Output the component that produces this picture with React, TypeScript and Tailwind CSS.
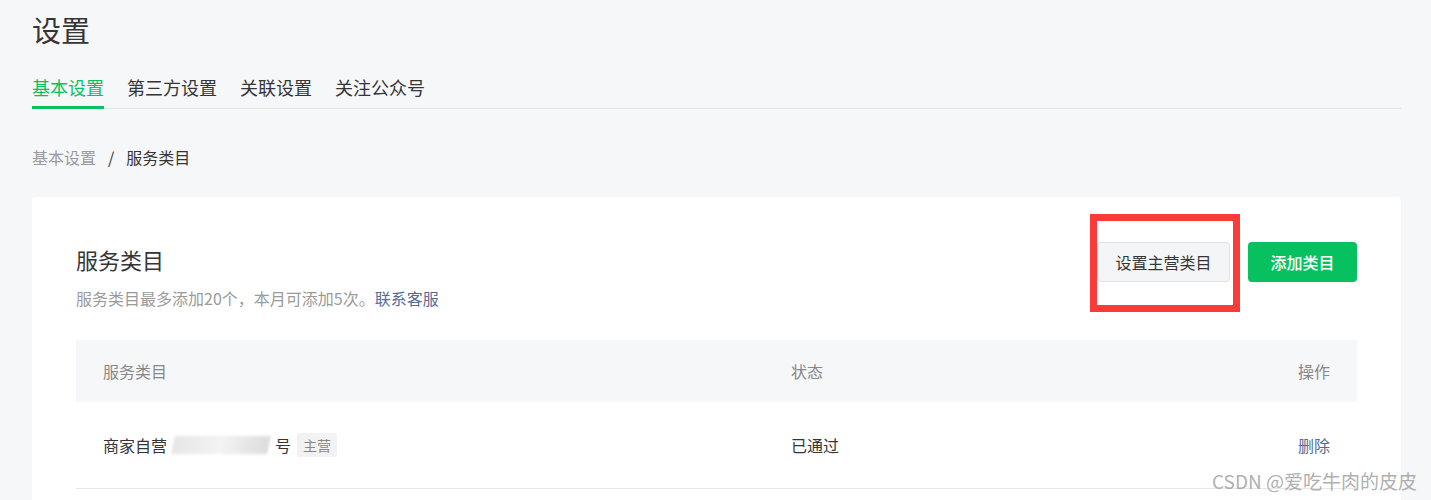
import React from "react";

const font = { fontFamily: '"Noto Sans CJK SC", "Noto Sans", sans-serif' };

const tabs = ["基本设置", "第三方设置", "关联设置", "关注公众号"];

export default function App() {
  return (
    <div className="relative min-h-[500px] overflow-hidden bg-[#f6f7f9] pl-[32px] pr-[30px] pt-[9px] text-[#353535]" style={font}>
      {/* page title */}
      <h1 className="text-[29px] leading-[40px] font-normal">设置</h1>

      {/* tabs */}
      <div className="mt-[26px] flex border-b border-[#e2e3e6]">
        {tabs.map((t, i) => (
          <div
            key={t}
            className={`mr-[23px] -mb-px pb-[7px] text-[18px] leading-[24px] ${
              i === 0 ? "border-b-[3px] border-[#07c160] text-[#07c160]" : "border-b-[3px] border-transparent"
            }`}
          >
            {t}
          </div>
        ))}
      </div>

      {/* breadcrumb */}
      <div className="mt-[36px] flex items-center text-[16px] leading-[24px]">
        <span className="text-[#9a9a9a]">基本设置</span>
        <span className="mx-[12px]">/</span>
        <span>服务类目</span>
      </div>

      {/* card */}
      <div className="mt-[28px] rounded-[4px] bg-white px-[44px] pt-[45px] pb-[40px]">
        <div className="flex items-start justify-between">
          <div>
            <h2 className="mt-[2px] text-[22px] leading-[30px] font-normal">服务类目</h2>
            <p className="mt-[12px] text-[16px] leading-[24px] text-[#9a9a9a]">
              服务类目最多添加20个，本月可添加5次。<span className="text-[#576b95]">联系客服</span>
            </p>
          </div>
          <div className="flex items-center gap-[18px]">
            <div className="relative">
              <button className="h-[40px] w-[133px] rounded-[4px] border border-[#e0e1e4] bg-[#f4f5f7] text-[16px] text-[#353535]">
                设置主营类目
              </button>
              {/* annotation box */}
              <div className="pointer-events-none absolute -left-[7px] -right-[10px] -top-[28px] -bottom-[30px] border-[7px] border-[#fb3a3a]" />
            </div>
            <button className="h-[40px] w-[109px] rounded-[4px] bg-[#07c160] text-[16px] font-medium text-white">
              添加类目
            </button>
          </div>
        </div>

        {/* table */}
        <div className="mt-[30px]">
          <div className="grid h-[62px] grid-cols-[688px_1fr_auto] items-center bg-[#f6f7f9] px-[27px] text-[16px] text-[#888]">
            <span>服务类目</span>
            <span>状态</span>
            <span>操作</span>
          </div>
          <div className="grid h-[87px] grid-cols-[688px_1fr_auto] items-center border-b border-[#e7e7eb] px-[27px] text-[16px]">
            <span className="flex items-center">
              商家自营
              <span className="mx-[6px] inline-block h-[18px] w-[96px] -skew-x-12 bg-gradient-to-r from-[#e6e6e6] via-[#f3f3f3] to-[#dcdcdc] blur-[1.5px]" />
              号
              <span className="ml-[6px] rounded-[2px] bg-[#f2f2f2] px-[6px] text-[14px] leading-[24px] text-[#888]">主营</span>
            </span>
            <span>已通过</span>
            <span className="text-[#576b95]">删除</span>
          </div>
        </div>
      </div>

      {/* watermark */}
      <div className="pointer-events-none absolute right-[14px] top-[468px] text-[19px] leading-[26px] text-[#9a9a9a]/80">
        CSDN @爱吃牛肉的皮皮
      </div>
    </div>
  );
}
